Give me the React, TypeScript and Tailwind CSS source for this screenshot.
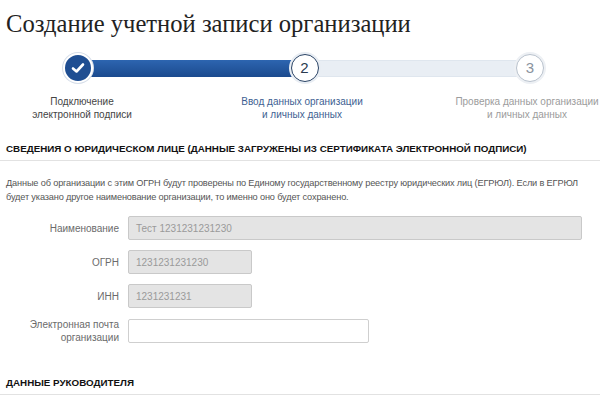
import React from "react";

const sans = { fontFamily: '"Liberation Sans", Arial, sans-serif' };

function Field({ label, value, w, disabled = true }: { label: React.ReactNode; value?: string; w: string; disabled?: boolean }) {
  return (
    <div className="flex items-center">
      <div className="w-[128px] pr-[9px] text-right text-[10px] leading-[13px] text-[#6b6b6b]">{label}</div>
      <div
        className={`${w} h-[24px] rounded-[2px] border flex items-center px-[7px] text-[10px] ${
          disabled ? "bg-[#e4e4e4] border-[#c9c9c9] text-[#9a9a9a]" : "bg-white border-[#cfcfcf]"
        }`}
      >
        {value}
      </div>
    </div>
  );
}

export default function App() {
  return (
    <div className="w-[600px] h-[400px] bg-white overflow-hidden" style={sans}>
      <h1
        className="pl-[6px] pt-[9px] text-[24.6px] leading-[30px] text-[#222]"
        style={{ fontFamily: '"Liberation Serif", "Times New Roman", serif' }}
      >
        Создание учетной записи организации
      </h1>

      {/* stepper */}
      <div className="mt-[14px] flex items-center pl-[63px] pr-[56px]">
        <div className="relative z-10 w-[30px] h-[30px] rounded-full bg-[#1f4e92] border-2 border-white shadow-[0_0_0_1px_#d6dee9] flex items-center justify-center">
          <svg width="14" height="12" viewBox="0 0 14 12">
            <path d="M2 6.5 L5.5 9.5 L12 2.5" stroke="white" strokeWidth="2.6" fill="none" strokeLinecap="round" strokeLinejoin="round" />
          </svg>
        </div>
        <div className="-mx-[2px] h-[17px] flex-1 bg-gradient-to-b from-[#2d65b0] to-[#1b4a8e]" />
        <div className="relative z-10 w-[28px] h-[28px] rounded-full bg-white border-[1.5px] border-[#2b4466] shadow-[0_0_0_2px_#e8edf3] flex items-center justify-center text-[15px] text-[#2b3a4f]">
          2
        </div>
        <div className="-mx-[2px] h-[17px] flex-1 bg-[#e9eef4] border-y border-[#dfe6ee]" />
        <div className="relative z-10 w-[28px] h-[28px] rounded-full bg-white border-[1.5px] border-[#b9c2cd] shadow-[0_0_0_2px_#edf0f4] flex items-center justify-center text-[15px] text-[#8a939e]">
          3
        </div>
      </div>

      <div className="mt-[12px] flex text-[10px] leading-[13px] text-center">
        <div className="w-[164px] shrink-0 text-[#444]">
          Подключение
          <br />
          электронной подписи
        </div>
        <div className="w-[276px] shrink-0 text-[#3e5f92]">
          Ввод данных организации
          <br />
          и личных данных
        </div>
        <div className="w-[174px] shrink-0 text-[#9c9c9c]">
          Проверка данных организации
          <br />
          и личных данных
        </div>
      </div>

      <div className="mt-[22px] pl-[6px] pb-[5px] border-b border-[#e2e2e2] text-[9.8px] font-bold text-[#111] leading-[12px]">
        СВЕДЕНИЯ О ЮРИДИЧЕСКОМ ЛИЦЕ (ДАННЫЕ ЗАГРУЖЕНЫ ИЗ СЕРТИФИКАТА ЭЛЕКТРОННОЙ ПОДПИСИ)
      </div>

      <p className="mt-[15px] pl-[6px] pr-[6px] text-[9.2px] tracking-[-0.15px] leading-[14px] text-[#555]">
        Данные об организации с этим ОГРН будут проверены по Единому государственному реестру юридических лиц (ЕГРЮЛ). Если в ЕГРЮЛ будет указано другое наименование организации, то именно оно будет сохранено.
      </p>

      <div className="mt-[12px] flex flex-col gap-[10px]">
        <Field label="Наименование" value="Тест 1231231231230" w="w-[454px]" />
        <Field label="ОГРН" value="1231231231230" w="w-[124px]" />
        <Field label="ИНН" value="1231231231" w="w-[124px]" />
        <Field
          label={
            <>
              Электронная почта
              <br />
              организации
            </>
          }
          w="w-[241px]"
          disabled={false}
        />
      </div>

      <div className="mt-[33px] pl-[6px] pb-[5px] border-b border-[#e2e2e2] text-[9.8px] font-bold text-[#111] leading-[12px]">
        ДАННЫЕ РУКОВОДИТЕЛЯ
      </div>
    </div>
  );
}
